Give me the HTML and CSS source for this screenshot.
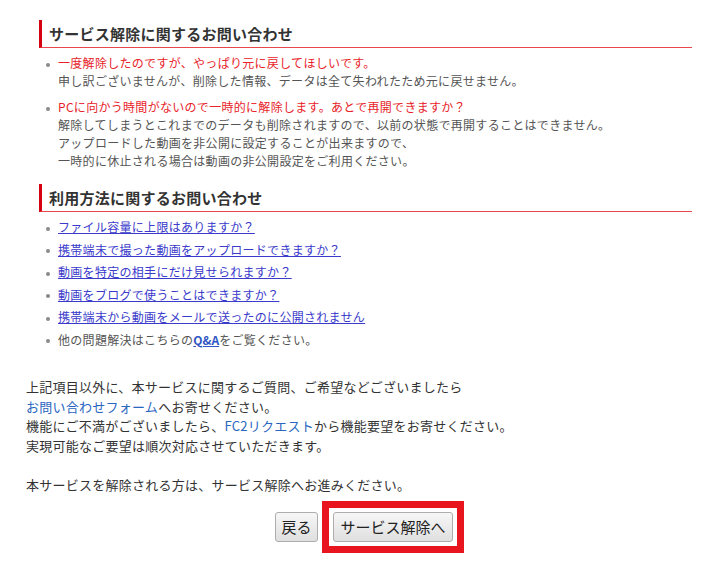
FILE: index.html
```html
<!DOCTYPE html>
<html lang="ja">
<head>
<meta charset="utf-8">
<title>サービス解除</title>
<link rel="stylesheet" href="styles.css">
</head>
<body>
<div class="page">
  <section class="section">
    <h2 class="heading">サービス解除に関するお問い合わせ</h2>
    <ul class="faq">
      <li><span class="q">一度解除したのですが、やっぱり元に戻してほしいです。</span><br>申し訳ございませんが、削除した情報、データは全て失われたため元に戻せません。</li>
      <li><span class="q">PCに向かう時間がないので一時的に解除します。あとで再開できますか？</span><br>解除してしまうとこれまでのデータも削除されますので、以前の状態で再開することはできません。<br>アップロードした動画を非公開に設定することが出来ますので、<br>一時的に休止される場合は動画の非公開設定をご利用ください。</li>
    </ul>
  </section>
  <section class="section second">
    <h2 class="heading">利用方法に関するお問い合わせ</h2>
    <ul class="links">
      <li><a href="#">ファイル容量に上限はありますか？</a></li>
      <li><a href="#">携帯端末で撮った動画をアップロードできますか？</a></li>
      <li><a href="#">動画を特定の相手にだけ見せられますか？</a></li>
      <li><a href="#">動画をブログで使うことはできますか？</a></li>
      <li><a href="#">携帯端末から動画をメールで送ったのに公開されません</a></li>
      <li>他の問題解決はこちらの<a href="#" class="qa">Q&amp;A</a>をご覧ください。</li>
    </ul>
  </section>
  <p class="note">上記項目以外に、本サービスに関するご質問、ご希望などございましたら<br><a href="#" class="plain">お問い合わせフォーム</a>へお寄せください。<br>機能にご不満がございましたら、<a href="#" class="plain">FC2リクエスト</a>から機能要望をお寄せください。<br>実現可能なご要望は順次対応させていただきます。<br><br>本サービスを解除される方は、サービス解除へお進みください。</p>
  <div class="actions">
    <button class="btn back" type="button">戻る</button>
    <div class="highlight"><button class="btn next" type="button">サービス解除へ</button></div>
  </div>
</div>
</body>
</html>
```
FILE: styles.css
```css
html, body {
  margin: 0;
  padding: 0;
  background: #ffffff;
}
body {
  font-family: "Noto Sans CJK JP", "Noto Sans", sans-serif;
  font-size: 12px;
  color: #555;
}
.page {
  padding: 20px 25px 0 26px;
}
.section {
  margin-left: 13px;
}
.section.second {
  margin-top: 14px;
}
.heading {
  margin: 0;
  height: 27px;
  line-height: 27px;
  border-left: 3px solid #d50010;
  border-bottom: 1px solid #e8474c;
  padding-left: 7px;
  font-size: 15px;
  font-weight: bold;
  letter-spacing: 0.25px;
  color: #333;
}
.faq, .links {
  list-style: none;
  margin: 6px 0 0 0;
  padding: 0 0 0 19px;
  line-height: 18px;
  letter-spacing: 0.3px;
}
.faq li + li {
  margin-top: 8px;
}
.links li {
  margin-top: 4.5px;
}
.links li:first-child {
  margin-top: 0;
}
.faq li::before, .links li::before {
  content: "";
  display: inline-block;
  width: 4px;
  height: 4px;
  border-radius: 50%;
  background: #8a8a8a;
  margin-left: -12px;
  margin-right: 8px;
  vertical-align: middle;
}
.q {
  color: #e8232a;
}
.links a {
  color: #3a3acb;
  text-decoration: underline;
}
.links a.qa {
  font-weight: bold;
  color: #2f56c4;
  letter-spacing: 0;
}
.note {
  margin: 28.5px 0 0 0;
  font-size: 13px;
  line-height: 19.5px;
  letter-spacing: 0.25px;
  color: #333;
}
.note a.plain {
  color: #2a66c0;
  text-decoration: none;
}
.actions {
  display: flex;
  align-items: center;
  gap: 4px;
  margin: 7px 0 0 249px;
}
.btn {
  font-family: "Noto Sans CJK JP", "Noto Sans", sans-serif;
  font-size: 15px;
  color: #222;
  height: 30px;
  line-height: 28px;
  padding: 0;
  white-space: nowrap;
  text-align: center;
  border: 1px solid #adadad;
  border-radius: 3px;
  background: linear-gradient(#f7f7f7, #dfdfdf);
  cursor: pointer;
}
.btn.back {
  width: 43px;
}
.btn.next {
  width: 120px;
}
.highlight {
  display: flex;
  border: 7px solid #e8141e;
  padding: 4px;
}
```
